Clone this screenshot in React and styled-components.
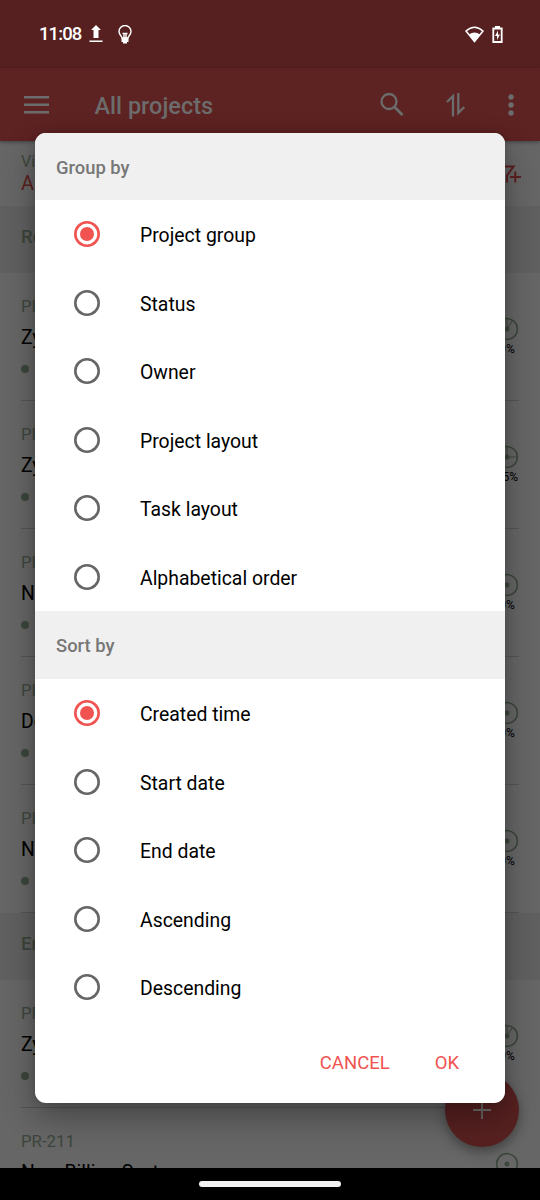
import React from 'react';
import styled, { createGlobalStyle } from 'styled-components';

const GlobalStyle = createGlobalStyle`
  * {
    box-sizing: border-box;
  }
  body {
    margin: 0;
    font-family: Roboto, "Liberation Sans", sans-serif;
  }
  svg {
    display: block;
  }
`

const Screen = styled.div`
  position: relative;
  display: flex;
  flex-direction: column;
  width: 540px;
  height: 1200px;
  overflow: hidden;
  background: #666666;
`

const StatusBar = styled.div`
  display: flex;
  align-items: center;
  flex: none;
  height: 68px;
  padding: 0 37px 0 39px;
  background: #572020;
  color: #ffffff;
`

const Clock = styled.span`
  width: 50px;
  font-size: 18.5px;
  font-weight: 500;
  letter-spacing: -0.9px;
`

const StatusIcons = styled.div`
  display: flex;
  align-items: center;
  gap: ${({ $gap }) => $gap}px;
  margin-left: ${({ $push }) => ($push ? 'auto' : '0')};
`

const AppBar = styled.header`
  display: flex;
  align-items: center;
  flex: none;
  height: 73px;
  padding: 0 26px 0 24px;
  background: #5d2222;
  color: #6c6c6c;
  box-shadow: 0 1px 4px rgba(0, 0, 0, 0.4);
  z-index: 1;
`

const AppTitle = styled.h1`
  margin: 2px auto 0 45.5px;
  font-size: 23.5px;
  font-weight: 500;
`

const AppActions = styled.div`
  display: flex;
  align-items: center;
  gap: 42px;
`

const ViewBar = styled.div`
  display: flex;
  align-items: center;
  justify-content: space-between;
  flex: none;
  height: 65px;
  padding: 0 18px 0 21px;
  color: #5c2020;
`

const ViewLabel = styled.div`
  font-size: 16px;
  line-height: 19px;
  color: #3c463b;
`

const ViewName = styled.div`
  font-size: 20px;
  line-height: 24px;
`

const GroupTitle = styled.h2`
  flex: none;
  height: 67px;
  margin: 0;
  padding-left: 21px;
  background: #606060;
  color: #3c463b;
  font-size: 18.5px;
  font-weight: 500;
  line-height: 63px;
`

const ProjectRow = styled.article`
  display: flex;
  justify-content: space-between;
  flex: none;
  height: 128px;
  margin: 0 21px;
  border-bottom: 1px solid #555555;
`

const ProjectId = styled.div`
  margin-top: 23px;
  font-size: 16.8px;
  line-height: 20px;
  color: #3c463b;
`

const ProjectName = styled.div`
  margin-top: 10px;
  font-size: 19.4px;
  line-height: 24px;
  color: #000000;
  white-space: nowrap;
`

const StatusDot = styled.div`
  width: 8px;
  height: 8px;
  margin-top: 15px;
  border-radius: 50%;
  background: #3c463b;
`

const Progress = styled.div`
  display: flex;
  flex-direction: column;
  align-items: center;
  width: 24px;
  margin-top: 44px;
  color: #000000;
  font-size: 12px;
  line-height: 16px;
`

const NavBar = styled.div`
  position: absolute;
  left: 0;
  right: 0;
  bottom: 0;
  display: flex;
  justify-content: center;
  height: 32px;
  padding-top: 13px;
  background: #000000;
`

const NavHandle = styled.div`
  width: 142px;
  height: 6px;
  border-radius: 3px;
  background: #f2f2f2;
`

const AddButton = styled.button`
  position: absolute;
  left: 445px;
  top: 1073px;
  display: flex;
  align-items: center;
  justify-content: center;
  width: 74px;
  height: 74px;
  padding: 0;
  border: none;
  border-radius: 50%;
  background: #572020;
  color: #6c6c6c;
  box-shadow: 0 5px 12px rgba(0, 0, 0, 0.35);
`

const Dialog = styled.div`
  position: absolute;
  left: 35px;
  top: 133px;
  width: 470px;
  height: 970px;
  display: flex;
  flex-direction: column;
  overflow: hidden;
  border-radius: 11px;
  background: #ffffff;
  box-shadow: 0 14px 32px rgba(0, 0, 0, 0.32), 0 0 9px rgba(0, 0, 0, 0.14);
  z-index: 2;
`

const SectionTitle = styled.h3`
  display: flex;
  align-items: center;
  flex: none;
  height: ${({ $height }) => $height}px;
  margin: 0;
  padding: 1px 0 0 21px;
  background: #f0f0f0;
  color: #777777;
  font-size: 18.4px;
  font-weight: 500;
`

const Option = styled.label`
  display: flex;
  align-items: center;
  flex: none;
  height: 68.5px;
  padding: 0 0 0 39px;
  color: #000000;
  font-size: 19.4px;
`

const Radio = styled.span`
  display: flex;
  align-items: center;
  justify-content: center;
  width: 26px;
  height: 26px;
  margin-right: 40px;
  border-radius: 50%;
  box-shadow: inset 0 0 0 2.6px ${({ $checked }) => ($checked ? '#f05350' : '#666666')};

  &::after {
    content: '';
    width: 14px;
    height: 14px;
    border-radius: 50%;
    background: ${({ $checked }) => ($checked ? '#f05350' : 'transparent')};
  }
`

const OptionText = styled.span`
  padding-top: 2.6px;
`

const DialogActions = styled.div`
  display: flex;
  justify-content: flex-end;
  gap: 45px;
  padding: 30px 46px 0 0;
`

const TextButton = styled.button`
  padding: 0;
  border: none;
  background: none;
  color: #f05350;
  font-family: inherit;
  font-size: 18.5px;
  line-height: 23px;
`

const sections = [
  {
    title: 'Group by',
    height: 67,
    selected: 'Project group',
    options: ['Project group', 'Status', 'Owner', 'Project layout', 'Task layout', 'Alphabetical order'],
  },
  {
    title: 'Sort by',
    height: 68,
    selected: 'Created time',
    options: ['Created time', 'Start date', 'End date', 'Ascending', 'Descending'],
  },
];

const groups = [
  {
    title: 'Re',
    projects: [
      { id: 'PR', name: 'Zy', percent: 9 },
      { id: 'PR', name: 'Zy', percent: 25 },
      { id: 'PR', name: 'N', percent: 0 },
      { id: 'PR', name: 'De', percent: 0 },
      { id: 'PR', name: 'N', percent: 0 },
    ],
  },
  {
    title: 'En',
    projects: [
      { id: 'PR', name: 'Zy', percent: 9 },
      { id: 'PR-211', name: 'New Billing Syst', percent: 0 },
    ],
  },
];

const ProgressRing = ({ percent }) => {
  const angle = (percent / 100) * Math.PI * 2;
  const x = 12 + 10 * Math.sin(angle);
  const y = 12 - 10 * Math.cos(angle);
  return (
    <svg width="24" height="24" viewBox="0 0 24 24" fill="none" stroke="#3c463b">
      <circle cx="12" cy="12" r="10.4" strokeWidth="1.5" />
      {percent > 0 && <path d={`M12 2v10L${x} ${y}`} />}
      <circle cx="12" cy="12" r="2.5" fill="#3c463b" stroke="none" />
    </svg>
  );
};

const App = () => (
  <>
    <GlobalStyle />
    <Screen>
      <StatusBar>
        <Clock>11:08</Clock>
        <StatusIcons $gap={15}>
          <svg width="14" height="18" viewBox="0 0 14 18" fill="currentColor">
            <path d="M7 0l5 5H9.500v8h-5V5H2zM0.500 15.500h13V17h-13z" />
          </svg>
          <svg width="14" height="19" viewBox="0 0 14 19" fill="none" stroke="currentColor" strokeWidth="1.4">
            <path d="M4 13c0-2-3-3-3-6.500a6 6 0 0 1 12 0C13 10 10 11 10 13z" />
            <path d="M4.500 8.500h5M6 8.500v5M8 8.500v5" />
            <path d="M3.500 13h7v4H9v1.500H5V17H3.500z" fill="currentColor" stroke="none" />
          </svg>
        </StatusIcons>
        <StatusIcons $gap={8} $push>
          <svg width="19" height="17" viewBox="0 0 19 17">
            <path d="M1 5Q9.500-2.500 18 5L9.500 15.500z" fill="none" stroke="currentColor" strokeWidth="1.5" />
            <path d="M4 8.500q5.500-4 11 0l-5.500 7z" fill="currentColor" />
          </svg>
          <svg width="11" height="17" viewBox="0 0 11 17">
            <path d="M1.300 2.500h8.400V16H1.300z" fill="none" stroke="currentColor" strokeWidth="1.8" />
            <path d="M3 0h5v2H3zM6 4.500L3 10h2v4l3-5.500H6z" fill="currentColor" />
          </svg>
        </StatusIcons>
      </StatusBar>

      <AppBar>
        <svg width="25" height="18" viewBox="0 0 25 18" fill="currentColor">
          <path d="M0 0h25v2.400H0zM0 7.500h25v2.400H0zM0 15h25v2.400H0z" />
        </svg>
        <AppTitle>All projects</AppTitle>
        <AppActions>
          <svg width="24" height="24" viewBox="0 0 24 24" fill="none" stroke="currentColor" strokeWidth="2.300">
            <circle cx="9" cy="8.500" r="7.500" />
            <path d="M14.500 14l8 8" strokeWidth="2.800" />
          </svg>
          <svg width="20" height="24" viewBox="0 0 20 24" fill="none" stroke="currentColor" strokeWidth="2.300">
            <path d="M1 9l6-6v20.500M12.300 0v20l6-6" />
          </svg>
          <svg width="6" height="22" viewBox="0 0 6 22" fill="currentColor">
            <circle cx="3" cy="3" r="2.700" />
            <circle cx="3" cy="11" r="2.700" />
            <circle cx="3" cy="19" r="2.700" />
          </svg>
        </AppActions>
      </AppBar>

      <ViewBar>
        <div>
          <ViewLabel>Vi</ViewLabel>
          <ViewName>A</ViewName>
        </div>
        <svg width="28" height="18" viewBox="0 0 28 18" fill="none" stroke="currentColor" strokeWidth="2">
          <path d="M2 1.500h17.500l-6.500 9v7M16 12h11M21.300 6.500v11" />
        </svg>
      </ViewBar>

      {groups.map((group) => (
        <React.Fragment key={group.title}>
          <GroupTitle>{group.title}</GroupTitle>
          {group.projects.map((project, index) => (
            <ProjectRow key={index}>
              <div>
                <ProjectId>{project.id}</ProjectId>
                <ProjectName>{project.name}</ProjectName>
                <StatusDot />
              </div>
              <Progress>
                <ProgressRing percent={project.percent} />
                <span>{project.percent}%</span>
              </Progress>
            </ProjectRow>
          ))}
        </React.Fragment>
      ))}

      <AddButton>
        <svg width="18" height="18" viewBox="0 0 18 18" fill="none" stroke="currentColor" strokeWidth="1.800">
          <path d="M0 9h18M9 0v18" />
        </svg>
      </AddButton>

      <Dialog>
        {sections.map((section) => (
          <React.Fragment key={section.title}>
            <SectionTitle $height={section.height}>{section.title}</SectionTitle>
            {section.options.map((option) => (
              <Option key={option}>
                <Radio $checked={option === section.selected} />
                <OptionText>{option}</OptionText>
              </Option>
            ))}
          </React.Fragment>
        ))}
        <DialogActions>
          <TextButton>CANCEL</TextButton>
          <TextButton>OK</TextButton>
        </DialogActions>
      </Dialog>

      <NavBar>
        <NavHandle />
      </NavBar>
    </Screen>
  </>
);

export default App;
